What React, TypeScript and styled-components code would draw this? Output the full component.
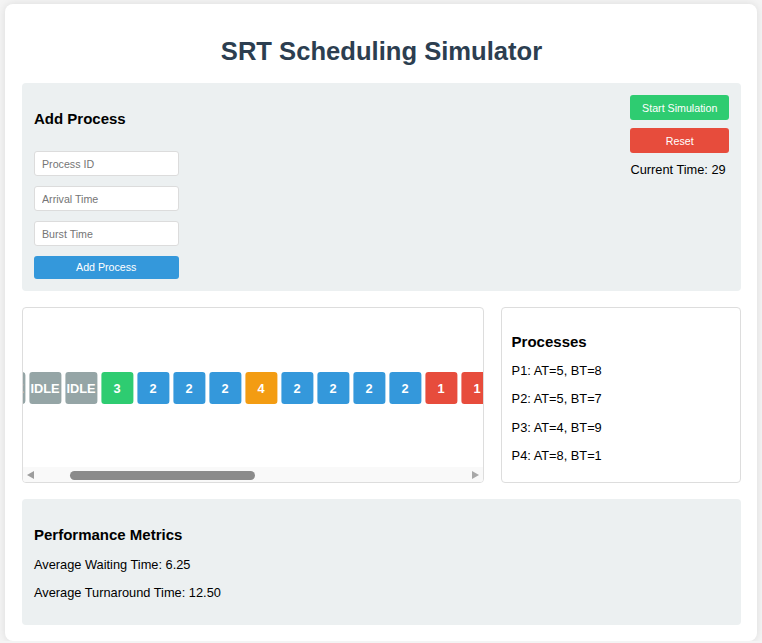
import React from "react";
import styled, { createGlobalStyle } from "styled-components";

const GlobalStyle = createGlobalStyle`
  html, body { margin: 0; padding: 0; background: #f4f4f4; }
  body { font-family: "Liberation Sans", Arial, sans-serif; color: #000; }
  * { box-sizing: border-box; }
`;

const Page = styled.div`
  padding-top: 4px;
`;

const Container = styled.div`
  width: 752px;
  margin: 0 auto;
  background: #fff;
  border-radius: 8px;
  box-shadow: 0 0 8px rgba(0, 0, 0, 0.1);
  padding: 16px 16px 16px 17px;
  display: flex;
  flex-direction: column;
`;

const Title = styled.h1`
  margin: 17.2px 0;
  font-size: 25.6px;
  font-weight: bold;
  text-align: center;
  color: #2c3e50;
`;

const Sections = styled.div`
  display: flex;
  flex-direction: column;
  gap: 16px;
`;

const GrayPanel = styled.section`
  background: #ecf0f1;
  border-radius: 4px;
  padding: 12px;
`;

const ControlPanel = styled(GrayPanel)`
  display: flex;
  justify-content: space-between;
  align-items: flex-start;
`;

const Heading = styled.h3<{ $below?: number }>`
  margin: 15px 0 ${(p) => p.$below ?? 13.5}px;
  font-size: 15px;
  font-weight: bold;
`;

const FormColumn = styled.div`
  display: flex;
  flex-direction: column;
`;

const Fields = styled.div`
  display: flex;
  flex-direction: column;
  gap: 9.4px;
  width: 144.5px;
`;

const Field = styled.input`
  height: 25.6px;
  border: 1px solid #dcdcdc;
  border-radius: 3px;
  background: #fff;
  padding: 0 7px;
  font-family: "Liberation Sans", Arial, sans-serif;
  font-size: 10.67px;
  outline: none;
  &::placeholder { color: #757575; }
`;

const Button = styled.button<{ $color: string }>`
  border: none;
  border-radius: 3px;
  background: ${(p) => p.$color};
  color: #fff;
  font-family: "Liberation Sans", Arial, sans-serif;
  font-size: 10.67px;
  padding: 0 11.7px;
  height: 25px;
  cursor: pointer;
`;

const AddButton = styled(Button)`
  height: 23.3px;
  width: 100%;
`;

const ActionColumn = styled.div`
  display: flex;
  flex-direction: column;
  gap: 8px;
`;

const Clock = styled.p`
  margin: 0.4px 0 0;
  font-size: 12.8px;
`;

const Row = styled.div`
  display: flex;
  gap: 17px;
`;

const GanttPanel = styled.div`
  flex: 0 0 462px;
  border: 1px solid #dddddd;
  border-radius: 4px;
  background: #fff;
  display: flex;
  flex-direction: column;
  overflow: hidden;
`;

const ChartViewport = styled.div`
  flex: 1;
  display: flex;
  align-items: center;
  padding: 0 9.6px;
  overflow: hidden;
`;

const Strip = styled.div`
  display: flex;
  margin-top: 1px;
`;

const Block = styled.div<{ $bg: string }>`
  flex: 0 0 32px;
  height: 32px;
  margin: 0 2px;
  border-radius: 3px;
  background: ${(p) => p.$bg};
  color: #fff;
  font-weight: bold;
  font-size: 12.8px;
  display: flex;
  align-items: center;
  justify-content: center;
  white-space: nowrap;
`;

const Scrollbar = styled.div`
  flex: 0 0 15px;
  display: flex;
  align-items: center;
  background: #f9f9f9;
`;

const ArrowCell = styled.div`
  flex: 0 0 15px;
  height: 15px;
  display: flex;
  align-items: center;
  justify-content: center;
`;

const Arrow = styled.div<{ $dir: "left" | "right" }>`
  width: 0;
  height: 0;
  border-top: 4.5px solid transparent;
  border-bottom: 4.5px solid transparent;
  ${(p) =>
    p.$dir === "left"
      ? "border-right: 7px solid #9d9d9d;"
      : "border-left: 7px solid #a8a8a8;"}
`;

const ThumbTrack = styled.div`
  flex: 1;
  height: 15px;
  display: flex;
  align-items: center;
`;

const Thumb = styled.div`
  height: 8.5px;
  border-radius: 5px;
  background: #8b8b8b;
  margin-top: 1px;
`;

const ProcessPanel = styled.div`
  flex: 1;
  border: 1px solid #dddddd;
  border-radius: 4px;
  background: #fff;
  padding: 9.6px 9.6px 6.5px;
`;

const Line = styled.p`
  margin: 0 0 13.2px;
  font-size: 12.8px;
`;

const colors: Record<string, string> = {
  IDLE: "#95a5a6",
  "1": "#e74c3c",
  "2": "#3498db",
  "3": "#2ecc71",
  "4": "#f39c12",
};

const timeline: string[] = [
  "IDLE", "IDLE", "IDLE", "IDLE",
  "3", "2", "2", "2", "4", "2", "2", "2", "2",
  "1", "1", "1", "1", "1", "1", "1", "1",
  "3", "3", "3", "3", "3", "3", "3", "3",
];

const processes = [
  { id: 1, at: 5, bt: 8 },
  { id: 2, at: 5, bt: 7 },
  { id: 3, at: 4, bt: 9 },
  { id: 4, at: 8, bt: 1 },
];

export default function App() {
  const scroll = 77.6;
  return (
    <Page>
      <GlobalStyle />
      <Container>
        <Title>SRT Scheduling Simulator</Title>
        <Sections>
          <ControlPanel>
            <FormColumn>
              <Heading $below={23.5}>Add Process</Heading>
              <Fields>
                <Field placeholder="Process ID" />
                <Field placeholder="Arrival Time" />
                <Field placeholder="Burst Time" />
                <AddButton $color="#3498db">Add Process</AddButton>
              </Fields>
            </FormColumn>
            <ActionColumn>
              <Button $color="#2ecc71">Start Simulation</Button>
              <Button $color="#e74c3c">Reset</Button>
              <Clock>Current Time: 29</Clock>
            </ActionColumn>
          </ControlPanel>

          <Row>
            <GanttPanel>
              <ChartViewport>
                <Strip style={{ transform: `translateX(-${scroll}px)` }}>
                  {timeline.map((t, i) => (
                    <Block key={i} $bg={colors[t]}>
                      {t}
                    </Block>
                  ))}
                </Strip>
              </ChartViewport>
              <Scrollbar>
                <ArrowCell>
                  <Arrow $dir="left" />
                </ArrowCell>
                <ThumbTrack>
                  <Thumb style={{ marginLeft: 32, width: 185 }} />
                </ThumbTrack>
                <ArrowCell>
                  <Arrow $dir="right" />
                </ArrowCell>
              </Scrollbar>
            </GanttPanel>
            <ProcessPanel>
              <Heading>Processes</Heading>
              {processes.map((p) => (
                <Line key={p.id}>
                  P{p.id}: AT={p.at}, BT={p.bt}
                </Line>
              ))}
            </ProcessPanel>
          </Row>

          <GrayPanel>
            <Heading>Performance Metrics</Heading>
            <Line>Average Waiting Time: 6.25</Line>
            <Line>Average Turnaround Time: 12.50</Line>
          </GrayPanel>
        </Sections>
      </Container>
    </Page>
  );
}
